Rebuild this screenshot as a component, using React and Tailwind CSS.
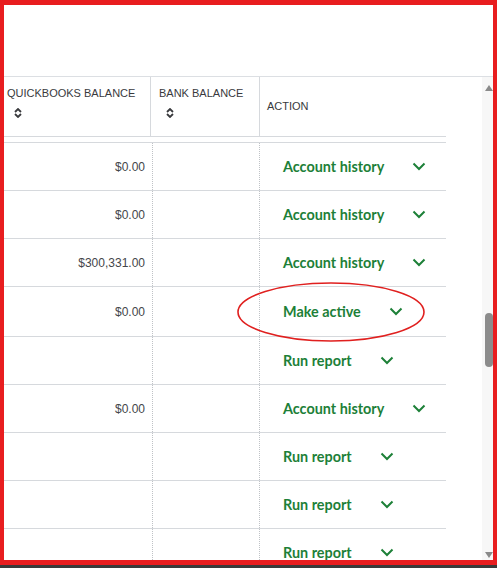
import React from 'react'

const rows = [
  { qb: '$0.00', action: 'Account history' },
  { qb: '$0.00', action: 'Account history' },
  { qb: '$300,331.00', action: 'Account history' },
  { qb: '$0.00', action: 'Make active', tall: true },
  { qb: '', action: 'Run report' },
  { qb: '$0.00', action: 'Account history' },
  { qb: '', action: 'Run report' },
  { qb: '', action: 'Run report' },
  { qb: '', action: 'Run report' },
]

const SortIcon = () => (
  <svg width="8" height="10" viewBox="0 0 8 10" className="mt-[9px]">
    <path d="M1 4 L4 1 L7 4 M1 6 L4 9 L7 6" fill="none" stroke="#393a3d" strokeWidth="1.8" />
  </svg>
)

const Chevron = () => (
  <svg width="14" height="9" viewBox="0 0 14 9">
    <path d="M1.5 1.5 L7 7 L12.5 1.5" fill="none" stroke="#1d8038" strokeWidth="2" />
  </svg>
)

const App = () => {
  return (
    <div className="w-[497px] h-[568px] bg-[#3a3a3a] overflow-hidden">
      <div
        className="relative w-[497px] h-[565px] bg-white border-[#e81d1f] border-t-[5px] border-l-4 border-r-4 border-b-[5px] overflow-hidden flex flex-col"
        style={{ fontFamily: '"Liberation Sans", Arial, sans-serif' }}
      >
        {/* blank toolbar area */}
        <div className="h-[71px] shrink-0" />
        <div className="h-px bg-[#dcdfe3] shrink-0" />

        <div className="flex flex-1 min-h-0">
          {/* table */}
          <div className="w-[478px] flex flex-col overflow-hidden">
            <div className="w-[442px] flex h-[60px] border-b border-[#d6d9dd] shrink-0 text-[11px] text-[#393a3d] font-medium">
              <div className="w-[147px] border-r border-[#d6d9dd] pl-[3px] pt-[10px] flex flex-col">
                <span className="leading-[12px]">QUICKBOOKS BALANCE</span>
                <span className="pl-[7px]"><SortIcon /></span>
              </div>
              <div className="w-[109px] border-r border-[#d6d9dd] pl-[8px] pt-[10px] flex flex-col">
                <span className="leading-[12px]">BANK BALANCE</span>
                <span className="pl-[7px]"><SortIcon /></span>
              </div>
              <div className="flex-1 pl-[7px] flex items-center">
                <span className="leading-[12px] mt-[-2px]">ACTION</span>
              </div>
            </div>
            <div className="h-[5px] shrink-0" />
            {rows.map((r, i) => (
              <div
                key={i}
                className={`w-[442px] flex shrink-0 border-t border-[#d6d9dd] ${r.tall ? 'h-[50px]' : 'h-[48px]'}`}
              >
                <div className="w-[149px] border-r border-dotted border-[#bfc2c6] flex items-center justify-end pr-[7px] text-[12px] text-[#44464a]">
                  {r.qb}
                </div>
                <div className="w-[107px] border-r border-dotted border-[#bfc2c6]" />
                <div className="flex-1 flex items-center pl-[23px]">
                  <span
                    className="text-[14.4px] font-bold text-[#1d8038]"
                    style={{ fontFamily: 'Lato, "Liberation Sans", sans-serif' }}
                  >
                    {r.action}
                  </span>
                  <span className="ml-[28px] flex items-center"><Chevron /></span>
                </div>
              </div>
            ))}
          </div>

          {/* scrollbar */}
          <div className="w-[11px] bg-[#f7f7f7] flex flex-col items-end">
            <div className="mt-[8px] w-[8px] flex justify-center">
              <div className="w-0 h-0 border-l-4 border-r-4 border-b-[6px] border-l-transparent border-r-transparent border-b-[#8a8a8a]" />
            </div>
            <div className="mt-[222px] w-[8px] h-[54px] rounded-full bg-[#8c8c8c]" />
            <div className="mt-auto mb-[2px] w-[8px] flex justify-center">
              <div className="w-0 h-0 border-l-4 border-r-4 border-t-[6px] border-l-transparent border-r-transparent border-t-[#8a8a8a]" />
            </div>
          </div>
        </div>

        {/* annotation ellipse */}
        <svg className="absolute left-0 top-0 pointer-events-none" width="489" height="554">
          <ellipse cx="327" cy="307" rx="93" ry="29" fill="none" stroke="#e0201f" strokeWidth="1.6" />
        </svg>
      </div>
    </div>
  )
}

export default App
